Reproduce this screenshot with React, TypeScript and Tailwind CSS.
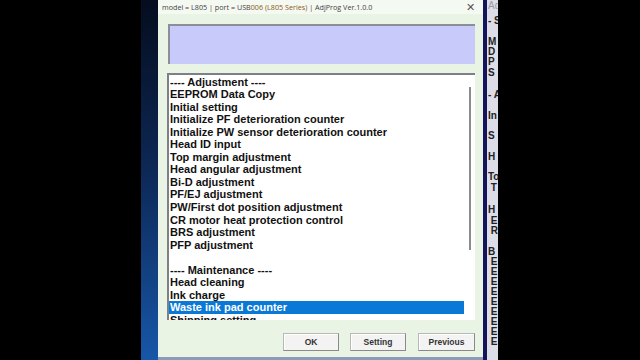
import React from "react";

const items: { t: string; sel?: boolean }[] = [
  { t: "---- Adjustment ----" },
  { t: "EEPROM Data Copy" },
  { t: "Initial setting" },
  { t: "Initialize PF deterioration counter" },
  { t: "Initialize PW sensor deterioration counter" },
  { t: "Head ID input" },
  { t: "Top margin adjustment" },
  { t: "Head angular adjustment" },
  { t: "Bi-D adjustment" },
  { t: "PF/EJ adjustment" },
  { t: "PW/First dot position adjustment" },
  { t: "CR motor heat protection control" },
  { t: "BRS adjustment" },
  { t: "PFP adjustment" },
  { t: "\u00a0" },
  { t: "---- Maintenance ----" },
  { t: "Head cleaning" },
  { t: "Ink charge" },
  { t: "Waste ink pad counter", sel: true },
  { t: "Shipping setting" },
];

const side: { t: string; h: number; c?: string }[] = [
  { t: "Ad", h: 15, c: "text-[#9a9aa8] font-normal" },
  { t: "- S", h: 21 },
  { t: "M", h: 10 },
  { t: "D", h: 10 },
  { t: "P", h: 11 },
  { t: "S", h: 22 },
  { t: "- A", h: 21 },
  { t: "In", h: 20 },
  { t: "S", h: 21 },
  { t: "H", h: 20 },
  { t: "To", h: 11 },
  { t: "\u00a0T", h: 22 },
  { t: "H", h: 11 },
  { t: "\u00a0E", h: 10 },
  { t: "\u00a0R", h: 21 },
  { t: "B", h: 10 },
  { t: "\u00a0E", h: 10 },
  { t: "\u00a0E", h: 10 },
  { t: "\u00a0E", h: 10 },
  { t: "\u00a0E", h: 10 },
  { t: "\u00a0E", h: 10 },
  { t: "\u00a0E", h: 10 },
  { t: "\u00a0E", h: 10 },
  { t: "\u00a0E", h: 10 },
  { t: "\u00a0E", h: 10 },
];

function Btn({ label }: { label: string }) {
  return (
    <div className="w-[57px] h-[18px] flex items-center justify-center bg-[#f3f3f3] border border-[#b8b8b8] border-r-[#8a8a8a] border-b-[#8a8a8a] text-[8.5px] font-bold text-[#333] shadow-[inset_1px_1px_0_#ffffff]">
      {label}
    </div>
  );
}

export default function App() {
  return (
    <div
      className="w-[640px] h-[360px] bg-black flex overflow-hidden"
      style={{ fontFamily: '"Liberation Sans", Arial, sans-serif' }}
    >
      <div className="w-[141px] h-full bg-black shrink-0" />
      <div className="w-[17px] h-full shrink-0 bg-gradient-to-b from-[#050d1f] via-[#0d2a5a] to-[#1757a8]" />
      {/* main window */}
      <div className="w-[325px] h-full shrink-0 bg-[#e9f4e5] flex flex-col">
        <div className="h-[14px] bg-[#f4f9f2] flex items-center pl-[4px] pr-[8px] shrink-0">
          <span className="text-[7.2px] text-[#444] whitespace-nowrap" style={{ fontFamily: '"Open Sans", "Liberation Sans", sans-serif' }}>
            model = L805 | port = USB<span className="text-[#8a5a22]">006 (L805 Series)</span> | AdjProg Ver.1.0.0
          </span>
          <span className="ml-auto text-[11px] leading-none text-[#555] font-light">✕</span>
        </div>
        <div className="flex flex-col pl-[9px] pr-[8px] pt-[10px]">
          <div className="ml-[1px] h-[40px] bg-[#c8cbf9] border-t-2 border-l-2 border-[#8c8f98]" />
          <div className="mt-[9px] h-[247px] bg-white border-t-2 border-l-2 border-[#7e8088] flex overflow-hidden">
            <div className="flex-1 flex flex-col pt-[0.5px] text-[11px] font-bold text-[#111] leading-[12.55px]">
              {items.map((it, i) => (
                <div
                  key={i}
                  className={
                    it.sel
                      ? "bg-[#0a78d6] text-white pl-[1px] whitespace-nowrap"
                      : "pl-[1px] whitespace-nowrap"
                  }
                >
                  {it.t}
                </div>
              ))}
            </div>
            <div className="w-[11px] shrink-0 flex justify-center pt-[12px]">
              <div className="w-[2px] h-[163px] bg-[#8c8c8c]" />
            </div>
          </div>
          <div className="mt-[13px] flex gap-[11px] pl-[116px]">
            <Btn label="OK" />
            <Btn label="Setting" />
            <div className="ml-[1px]">
              <Btn label="Previous" />
            </div>
          </div>
        </div>
        <div className="mt-auto h-[3px] bg-[#8a9cb8]" />
      </div>
      {/* second window edge */}
      <div className="w-[4px] h-full shrink-0 bg-[#14145a]" />
      <div className="w-[11px] h-full shrink-0 bg-[#dcdde7] overflow-hidden flex flex-col pt-[1px] pl-[1px] text-[10px] font-bold text-[#222] leading-[10px]">
        {side.map((s, i) => (
          <div key={i} className={"whitespace-nowrap " + (s.c ?? "")} style={{ height: s.h }}>
            {s.t}
          </div>
        ))}
      </div>
      <div className="flex-1 h-full bg-black" />
    </div>
  );
}
